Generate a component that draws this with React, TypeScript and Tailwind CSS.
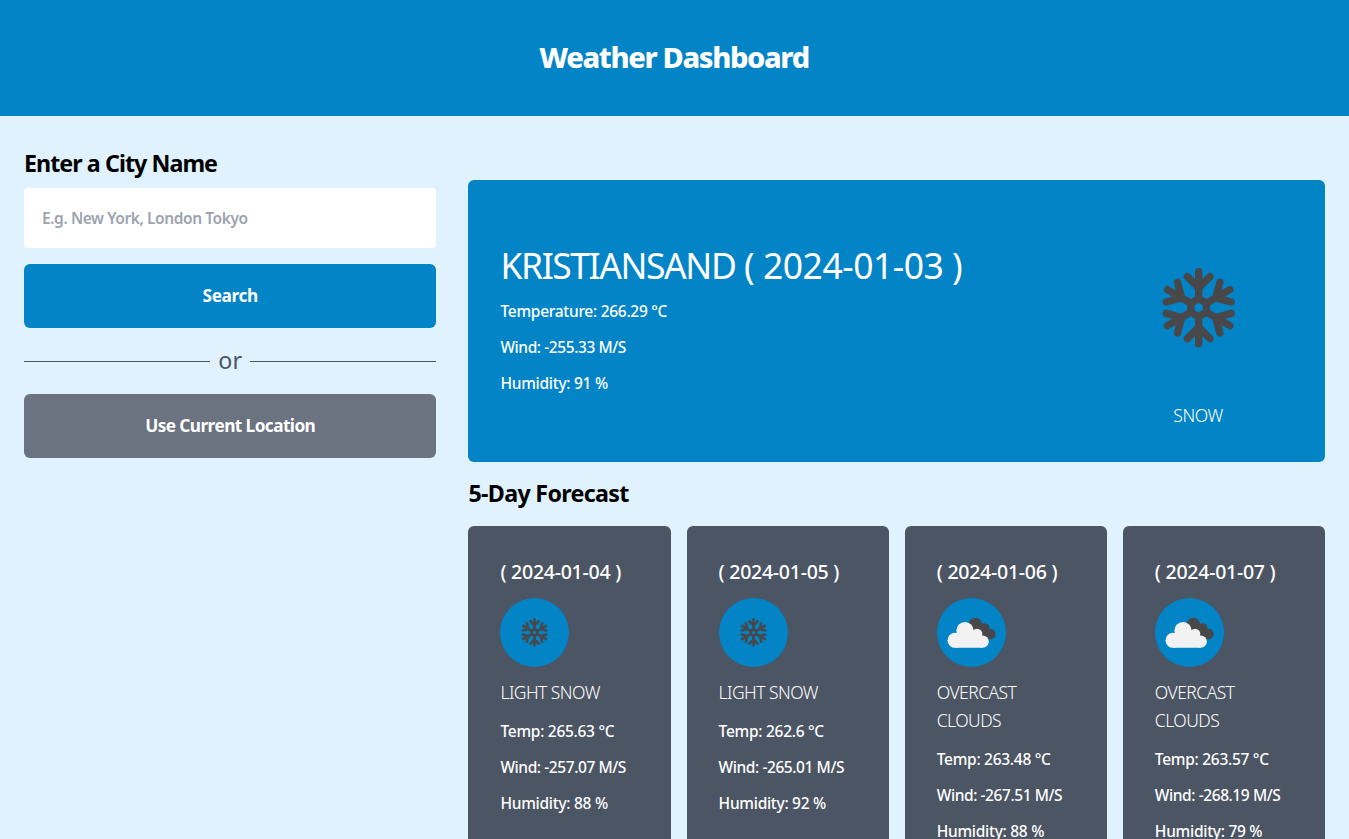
type Day = {
  date: string;
  icon: "snow" | "clouds";
  condition: string;
  temp: string;
  wind: string;
  humidity: string;
};

const days: Day[] = [
  { date: "2024-01-04", icon: "snow", condition: "LIGHT SNOW", temp: "265.63", wind: "-257.07", humidity: "88" },
  { date: "2024-01-05", icon: "snow", condition: "LIGHT SNOW", temp: "262.6", wind: "-265.01", humidity: "92" },
  { date: "2024-01-06", icon: "clouds", condition: "OVERCAST CLOUDS", temp: "263.48", wind: "-267.51", humidity: "88" },
  { date: "2024-01-07", icon: "clouds", condition: "OVERCAST CLOUDS", temp: "263.57", wind: "-268.19", humidity: "79" },
];

const ARMS = [0, 60, 120, 180, 240, 300];

function Snowflake({ className, viewBox }: { className: string; viewBox: string }) {
  return (
    <svg className={className} viewBox={viewBox} fill="none" stroke="#48484a" strokeWidth="22" strokeLinecap="round" strokeLinejoin="round">
      <path d="M0-27 23.4-13.5V13.5L0 27-23.4 13.5V-13.5Z" />
      {ARMS.map((angle) => (
        <path key={angle} transform={`rotate(${angle})`} d="M0-28V-108M-34-93 0-59 34-93" />
      ))}
    </svg>
  );
}

function Clouds({ className }: { className: string }) {
  return (
    <svg className={className} viewBox="0 0 207 207">
      <g fill="#48484a">
        <circle cx="115" cy="80" r="20.5" />
        <circle cx="143" cy="90" r="14.5" />
        <circle cx="160" cy="108" r="16" />
        <path d="M112 84 142 84 160 122V124H130Z" />
      </g>
      <g fill="#f2f2f2">
        <circle cx="54" cy="127" r="22.5" />
        <circle cx="84" cy="98" r="26" />
        <circle cx="120" cy="108" r="16" />
        <circle cx="137" cy="131" r="18.5" />
        <path d="M53 106H84L122 104 137 120V149.5H54Z" />
      </g>
    </svg>
  );
}

function Stat({ label, value }: { label: string; value: string }) {
  const tracking = label === "Wind" ? "tracking-[-0.42px]" : "tracking-[-0.28px]";
  return (
    <p className={`whitespace-nowrap text-[15.5px] leading-6 font-medium ${tracking}`}>
      {`${label}: ${value}`}
    </p>
  );
}

function DayCard({ day }: { day: Day }) {
  return (
    <li className="flex flex-col gap-3 rounded-md bg-[#4b5563] p-8 text-white">
      <h3 className="whitespace-nowrap text-[19.5px] leading-7 font-medium tracking-[-0.25px]">( {day.date} )</h3>
      <div className="size-[69px] rounded-full bg-[#0284c7]">
        {day.icon === "snow" ? (
          <Snowflake className="size-full" viewBox="-287 -287 574 574" />
        ) : (
          <Clouds className="size-full" />
        )}
      </div>
      <p className="-mt-px mb-px text-[17.5px] leading-7 font-light tracking-[-0.55px]">{day.condition}</p>
      <Stat label="Temp" value={`${day.temp} °C`} />
      <Stat label="Wind" value={`${day.wind} M/S`} />
      <Stat label="Humidity" value={`${day.humidity} %`} />
    </li>
  );
}

export default function App() {
  return (
    <div className="h-screen overflow-hidden bg-[#e0f2fe] font-['Noto_Sans',sans-serif] text-black">
      <header className="bg-[#0284c7] py-10 text-center">
        <h1 className="pr-px pb-0.5 text-[29px] leading-[34px] font-extrabold tracking-[-1.35px] text-white">Weather Dashboard</h1>
      </header>

      <main className="flex gap-8 px-6 pt-8">
        <section className="w-[412.45px] shrink-0">
          <h2 className="pb-0.5 text-[23.25px] leading-[30px] font-bold tracking-[-0.95px]">Enter a City Name</h2>
          <input
            type="text"
            placeholder="E.g. New York, London Tokyo"
            className="mt-2 block h-[60px] w-full rounded bg-white px-[18px] text-[15.5px] font-semibold tracking-[-0.41px] placeholder:text-[#9ca3af] placeholder:opacity-100"
          />
          <button className="mt-4 block h-16 w-full rounded-md bg-[#0284c7] text-[17.25px] font-bold tracking-[-0.4px] text-white">
            Search
          </button>
          <div className="flex h-[66px] items-center">
            <span className="h-px flex-1 bg-[#4b5563]" />
            <span className="w-10 pb-0.5 text-center text-[23.25px] leading-[30px] tracking-[0.2px] text-[#4b5563]">or</span>
            <span className="h-px flex-1 bg-[#4b5563]" />
          </div>
          <button className="block h-16 w-full rounded-md bg-[#6b7280] text-[17.25px] font-bold tracking-[-0.58px] text-white">
            Use Current Location
          </button>
        </section>

        <section className="min-w-0 flex-1 pt-8">
          <div className="flex items-center justify-between rounded-md bg-[#0284c7] p-8 text-white">
            <div className="flex flex-col gap-3">
              <h2 className="pb-[3px] text-[35.5px] leading-[37px] whitespace-nowrap tracking-[-0.5px]">
                <span className="tracking-[-1.43px]">KRISTIANSAND</span> ( 2024-01-03 )
              </h2>
              <Stat label="Temperature" value="266.29 °C" />
              <Stat label="Wind" value="-255.33 M/S" />
              <Stat label="Humidity" value="91 %" />
            </div>
            <div className="w-[190px] text-center">
              <Snowflake className="size-[190px]" viewBox="-287 -287 570 570" />
              <p className="-mt-px mb-px text-[17.5px] leading-7 font-light tracking-[-0.5px]">SNOW</p>
            </div>
          </div>

          <h2 className="mt-4 pb-0.5 text-[23.25px] leading-[30px] font-bold tracking-[-0.68px]">5-Day Forecast</h2>
          <ul className="mt-4 grid grid-cols-4 gap-4">
            {days.map((day) => (
              <DayCard key={day.date} day={day} />
            ))}
          </ul>
        </section>
      </main>
    </div>
  );
}
